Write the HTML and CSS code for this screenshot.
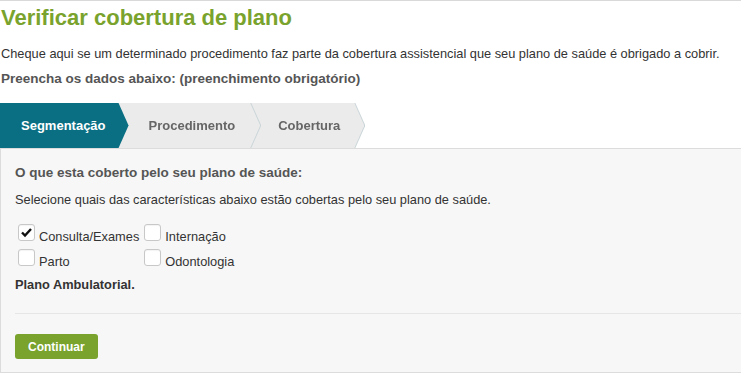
FILE: index.html
```html
<!DOCTYPE html>
<html lang="pt-BR">
<head>
  <meta charset="UTF-8">
  <title>Verificar cobertura de plano</title>
  <link rel="stylesheet" href="styles.css">
</head>
<body>

<main class="page">
  <h1 class="title">Verificar cobertura de plano</h1>
  <p class="intro">Cheque aqui se um determinado procedimento faz parte da cobertura assistencial que seu plano de saúde é obrigado a cobrir.</p>
  <p class="required">Preencha os dados abaixo: (preenchimento obrigatório)</p>

  <!-- Steps -->
  <ol class="steps">
    <li class="step step-active"><span class="step-shape">Segmentação</span></li>
    <li class="step step-two"><span class="step-shape">Procedimento</span></li>
    <li class="step step-three"><span class="step-shape">Cobertura</span></li>
  </ol>

  <!-- Segmentation panel -->
  <section class="panel">
    <h2 class="panel-title">O que esta coberto pelo seu plano de saúde:</h2>
    <p class="panel-text">Selecione quais das características abaixo estão cobertas pelo seu plano de saúde.</p>

    <div class="options">
      <label class="option">
        <span class="checkbox">
          <svg viewBox="0 0 17 17" width="17" height="17"><path d="M4 8.5 L7 11.5 L13 5" fill="none" stroke="#111" stroke-width="2.4"/></svg>
        </span>
        <span class="option-label">Consulta/Exames</span>
      </label>
      <label class="option">
        <span class="checkbox"></span>
        <span class="option-label">Internação</span>
      </label>
      <label class="option">
        <span class="checkbox"></span>
        <span class="option-label">Parto</span>
      </label>
      <label class="option">
        <span class="checkbox"></span>
        <span class="option-label">Odontologia</span>
      </label>
    </div>

    <p class="plan">Plano Ambulatorial.</p>

    <div class="actions">
      <button class="btn" type="button">Continuar</button>
    </div>
  </section>
</main>

</body>
</html>
```

FILE: styles.css
```css
:root {
  --green: #79a32d;
  --teal: #0b6f83;
  --text-color: #333;
  --label-color: #555;
  --tab-gray: #ebebeb;
  --border-color: #dcdcdc;
  --panel-bg: #f7f7f7;
}

body {
  margin: 0;
  font-family: "Liberation Sans", Arial, sans-serif;
  font-size: 12.8px;
  color: var(--text-color);
  background: white;
}

.page {
  border-top: 1px solid #d9d9d9;
}

.title {
  margin: 4px 0 0;
  padding: 0 1px;
  font-size: 22px;
  line-height: 26px;
  font-weight: bold;
  color: var(--green);
}

.intro {
  margin: 14px 0 0;
  padding: 0 1px;
  line-height: 18px;
}

.required {
  margin: 7px 0 0;
  padding: 0 1px;
  font-size: 13.5px;
  line-height: 18px;
  font-weight: bold;
  color: var(--label-color);
}

/* steps */
.steps {
  display: flex;
  list-style: none;
  margin: 15px 0 0;
  padding: 0;
  height: 45px;
}

.step {
  filter: drop-shadow(1px 0 0 #c9d4d8);
}

.step-shape {
  display: block;
  height: 45px;
  line-height: 45px;
  font-size: 13px;
  font-weight: bold;
  color: #666;
  background: var(--tab-gray);
  clip-path: polygon(0 0, calc(100% - 10px) 0, 100% 50%, calc(100% - 10px) 100%, 0 100%);
}

.step-active {
  z-index: 3;
  filter: none;
}

.step-active .step-shape {
  background: var(--teal);
  color: white;
  padding: 0 23px 0 21px;
}

.step-two {
  z-index: 2;
  margin-left: -10px;
}

.step-two .step-shape {
  padding: 0 25px 0 30px;
}

.step-three {
  z-index: 1;
  margin-left: -10px;
}

.step-three .step-shape {
  padding: 0 24px 0 28px;
}

/* panel */
.panel {
  border: 1px solid var(--border-color);
  border-right: none;
  background: var(--panel-bg);
  padding: 15px 0 13px 14px;
}

.panel-title {
  margin: 0;
  font-size: 13.5px;
  line-height: 18px;
  font-weight: bold;
  color: var(--label-color);
}

.panel-text {
  margin: 9px 0 0;
  line-height: 18px;
}

.options {
  display: grid;
  grid-template-columns: auto auto;
  justify-content: start;
  column-gap: 5px;
  margin: 11px 0 0 3px;
}

.option {
  display: flex;
  align-items: flex-end;
  height: 25px;
}

.checkbox {
  display: block;
  box-sizing: border-box;
  width: 17px;
  height: 17px;
  margin-bottom: 4px;
  background: white;
  border: 1px solid #c8c8c8;
  border-radius: 3px;
  box-shadow: inset 0 1px 1px rgba(0, 0, 0, 0.05);
}

.checkbox svg {
  display: block;
  margin: -1px;
}

.option-label {
  margin-left: 4px;
  line-height: 16px;
}

.plan {
  margin: 6px 0 0;
  line-height: 18px;
  font-weight: bold;
}

.actions {
  margin-top: 19px;
  padding-top: 20px;
  border-top: 1px solid #e6e6e6;
}

.btn {
  display: block;
  height: 25px;
  padding: 0 13px;
  border: none;
  border-radius: 3px;
  background: var(--green);
  color: white;
  font-family: "Liberation Sans", Arial, sans-serif;
  font-size: 12px;
  font-weight: bold;
}
```
